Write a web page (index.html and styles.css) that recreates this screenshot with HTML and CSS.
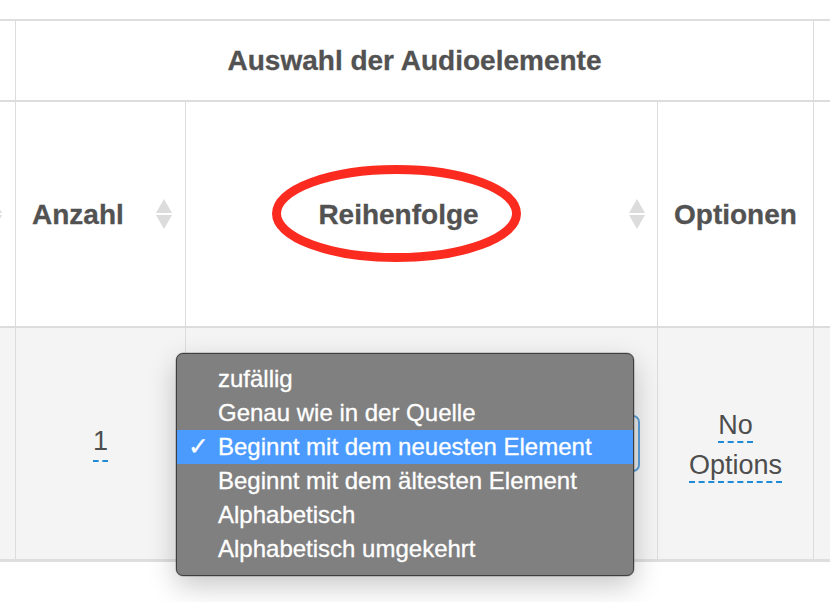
FILE: index.html
```html
<!DOCTYPE html>
<html lang="de">
<head>
<meta charset="utf-8">
<title>Auswahl der Audioelemente</title>
<link rel="stylesheet" href="styles.css">
</head>
<body>
<div class="viewport">
  <div class="grid">
    <div class="cell blank"></div>
    <div class="cell group-title">Auswahl der Audioelemente</div>
    <div class="cell blank"></div>

    <div class="cell head head-left">
      <svg class="sort" width="18" height="30" viewBox="0 0 18 30"><path d="M9 0 L17 14 L1 14 Z" fill="#dcdcdc"/><path d="M1 16 L17 16 L9 30 Z" fill="#dcdcdc"/></svg>
    </div>
    <div class="cell head">
      <span class="head-text">Anzahl</span>
      <svg class="sort" width="18" height="30" viewBox="0 0 18 30"><path d="M9 0 L17 14 L1 14 Z" fill="#dcdcdc"/><path d="M1 16 L17 16 L9 30 Z" fill="#dcdcdc"/></svg>
    </div>
    <div class="cell head head-order">
      <span class="head-text centered">Reihenfolge</span>
      <svg class="sort" width="18" height="30" viewBox="0 0 18 30"><path d="M9 0 L17 14 L1 14 Z" fill="#dcdcdc"/><path d="M1 16 L17 16 L9 30 Z" fill="#dcdcdc"/></svg>
      <svg class="circle" width="249" height="97" viewBox="0 0 249 97"><ellipse cx="124.5" cy="48.5" rx="120" ry="44" fill="none" stroke="#fb2b20" stroke-width="9"/></svg>
    </div>
    <div class="cell head">
      <span class="head-text">Optionen</span>
    </div>
    <div class="cell head head-right"></div>

    <div class="cell body"></div>
    <div class="cell body center"><span class="dotted">1</span></div>
    <div class="cell body order-cell">
      <div class="select"></div>
      <ul class="menu">
        <li class="item"><span class="check"></span>zufällig</li>
        <li class="item"><span class="check"></span>Genau wie in der Quelle</li>
        <li class="item selected"><span class="check">✓</span>Beginnt mit dem neuesten Element</li>
        <li class="item"><span class="check"></span>Beginnt mit dem ältesten Element</li>
        <li class="item"><span class="check"></span>Alphabetisch</li>
        <li class="item"><span class="check"></span>Alphabetisch umgekehrt</li>
      </ul>
    </div>
    <div class="cell body center">
      <div class="options"><span class="dotted">No</span><br><span class="dotted">Options</span></div>
    </div>
    <div class="cell body"></div>
  </div>
</div>
</body>
</html>
```

FILE: styles.css
```css
html, body {
  margin: 0;
  padding: 0;
  background: #ffffff;
}

body {
  font-family: "Liberation Sans", Arial, Helvetica, sans-serif;
  color: #525252;
  width: 830px;
  height: 602px;
  overflow: hidden;
}

.viewport {
  width: 830px;
  padding-top: 19px;
}

.grid {
  display: grid;
  grid-template-columns: 15px 169px 471px 155px 16px;
  grid-template-rows: 79px 224px 231px;
  column-gap: 1px;
  row-gap: 2px;
  background: #dcdcdc;
  border-top: 2px solid #dedede;
  border-bottom: 3px solid #dedede;
  width: 830px;
}

.cell {
  background: #ffffff;
  min-width: 0;
}

.group-title {
  grid-column: span 3;
  display: flex;
  align-items: center;
  justify-content: center;
  font-weight: bold;
  font-size: 28px;
  padding-top: 1px;
  -webkit-text-stroke: 0.3px #525252;
}

.head {
  display: flex;
  align-items: center;
  justify-content: space-between;
  padding: 0 12px 0 16px;
  font-weight: bold;
  font-size: 28px;
  -webkit-text-stroke: 0.3px #525252;
}

.head-text {
  padding-top: 1px;
}

.head-left {
  overflow: hidden;
  justify-content: flex-end;
  padding: 0 12px 0 0;
}

.head-right {
  padding: 0;
}

.head-order {
  position: relative;
  padding-right: 11px;
}

.head-text.centered {
  flex: 1;
  text-align: center;
  margin-right: 33px;
}

.sort {
  flex: none;
  filter: blur(0.4px);
}

.circle {
  position: absolute;
  left: 86px;
  top: 63px;
}

.body {
  background: #f4f4f4;
  font-size: 27px;
  color: #4d4d4d;
}

.center {
  display: flex;
  align-items: center;
  justify-content: center;
}

.dotted {
  border-bottom: 2px dashed #1f8ad6;
  padding-bottom: 3px;
}

.options {
  text-align: center;
  line-height: 40px;
  padding-top: 2px;
}

.options .dotted {
  padding-bottom: 1px;
}

.order-cell {
  position: relative;
  display: flex;
  align-items: center;
  padding: 0 17px 0 16px;
}

.select {
  flex: 1;
  height: 53px;
  border: 2px solid #5c9fd8;
  border-radius: 7px;
  background: #e9e9e9;
}

.menu {
  position: absolute;
  left: -10px;
  top: 25px;
  width: 456px;
  margin: 0;
  padding: 8px 0 9px;
  list-style: none;
  background: #808080;
  border: 1px solid #3f3f3f;
  border-radius: 7px;
  box-shadow: 0 10px 28px rgba(0, 0, 0, 0.22), 0 0 0 0.5px rgba(0, 0, 0, 0.3);
  color: #ffffff;
  font-size: 24px;
}

.item {
  height: 34px;
  line-height: 34px;
  padding-left: 11px;
  white-space: nowrap;
  -webkit-text-stroke: 0.3px #ffffff;
}

.item.selected {
  background: #4b9bff;
}

.check {
  display: inline-block;
  width: 30px;
  font-family: "DejaVu Sans", sans-serif;
  font-size: 25px;
  font-weight: bold;
}
```
